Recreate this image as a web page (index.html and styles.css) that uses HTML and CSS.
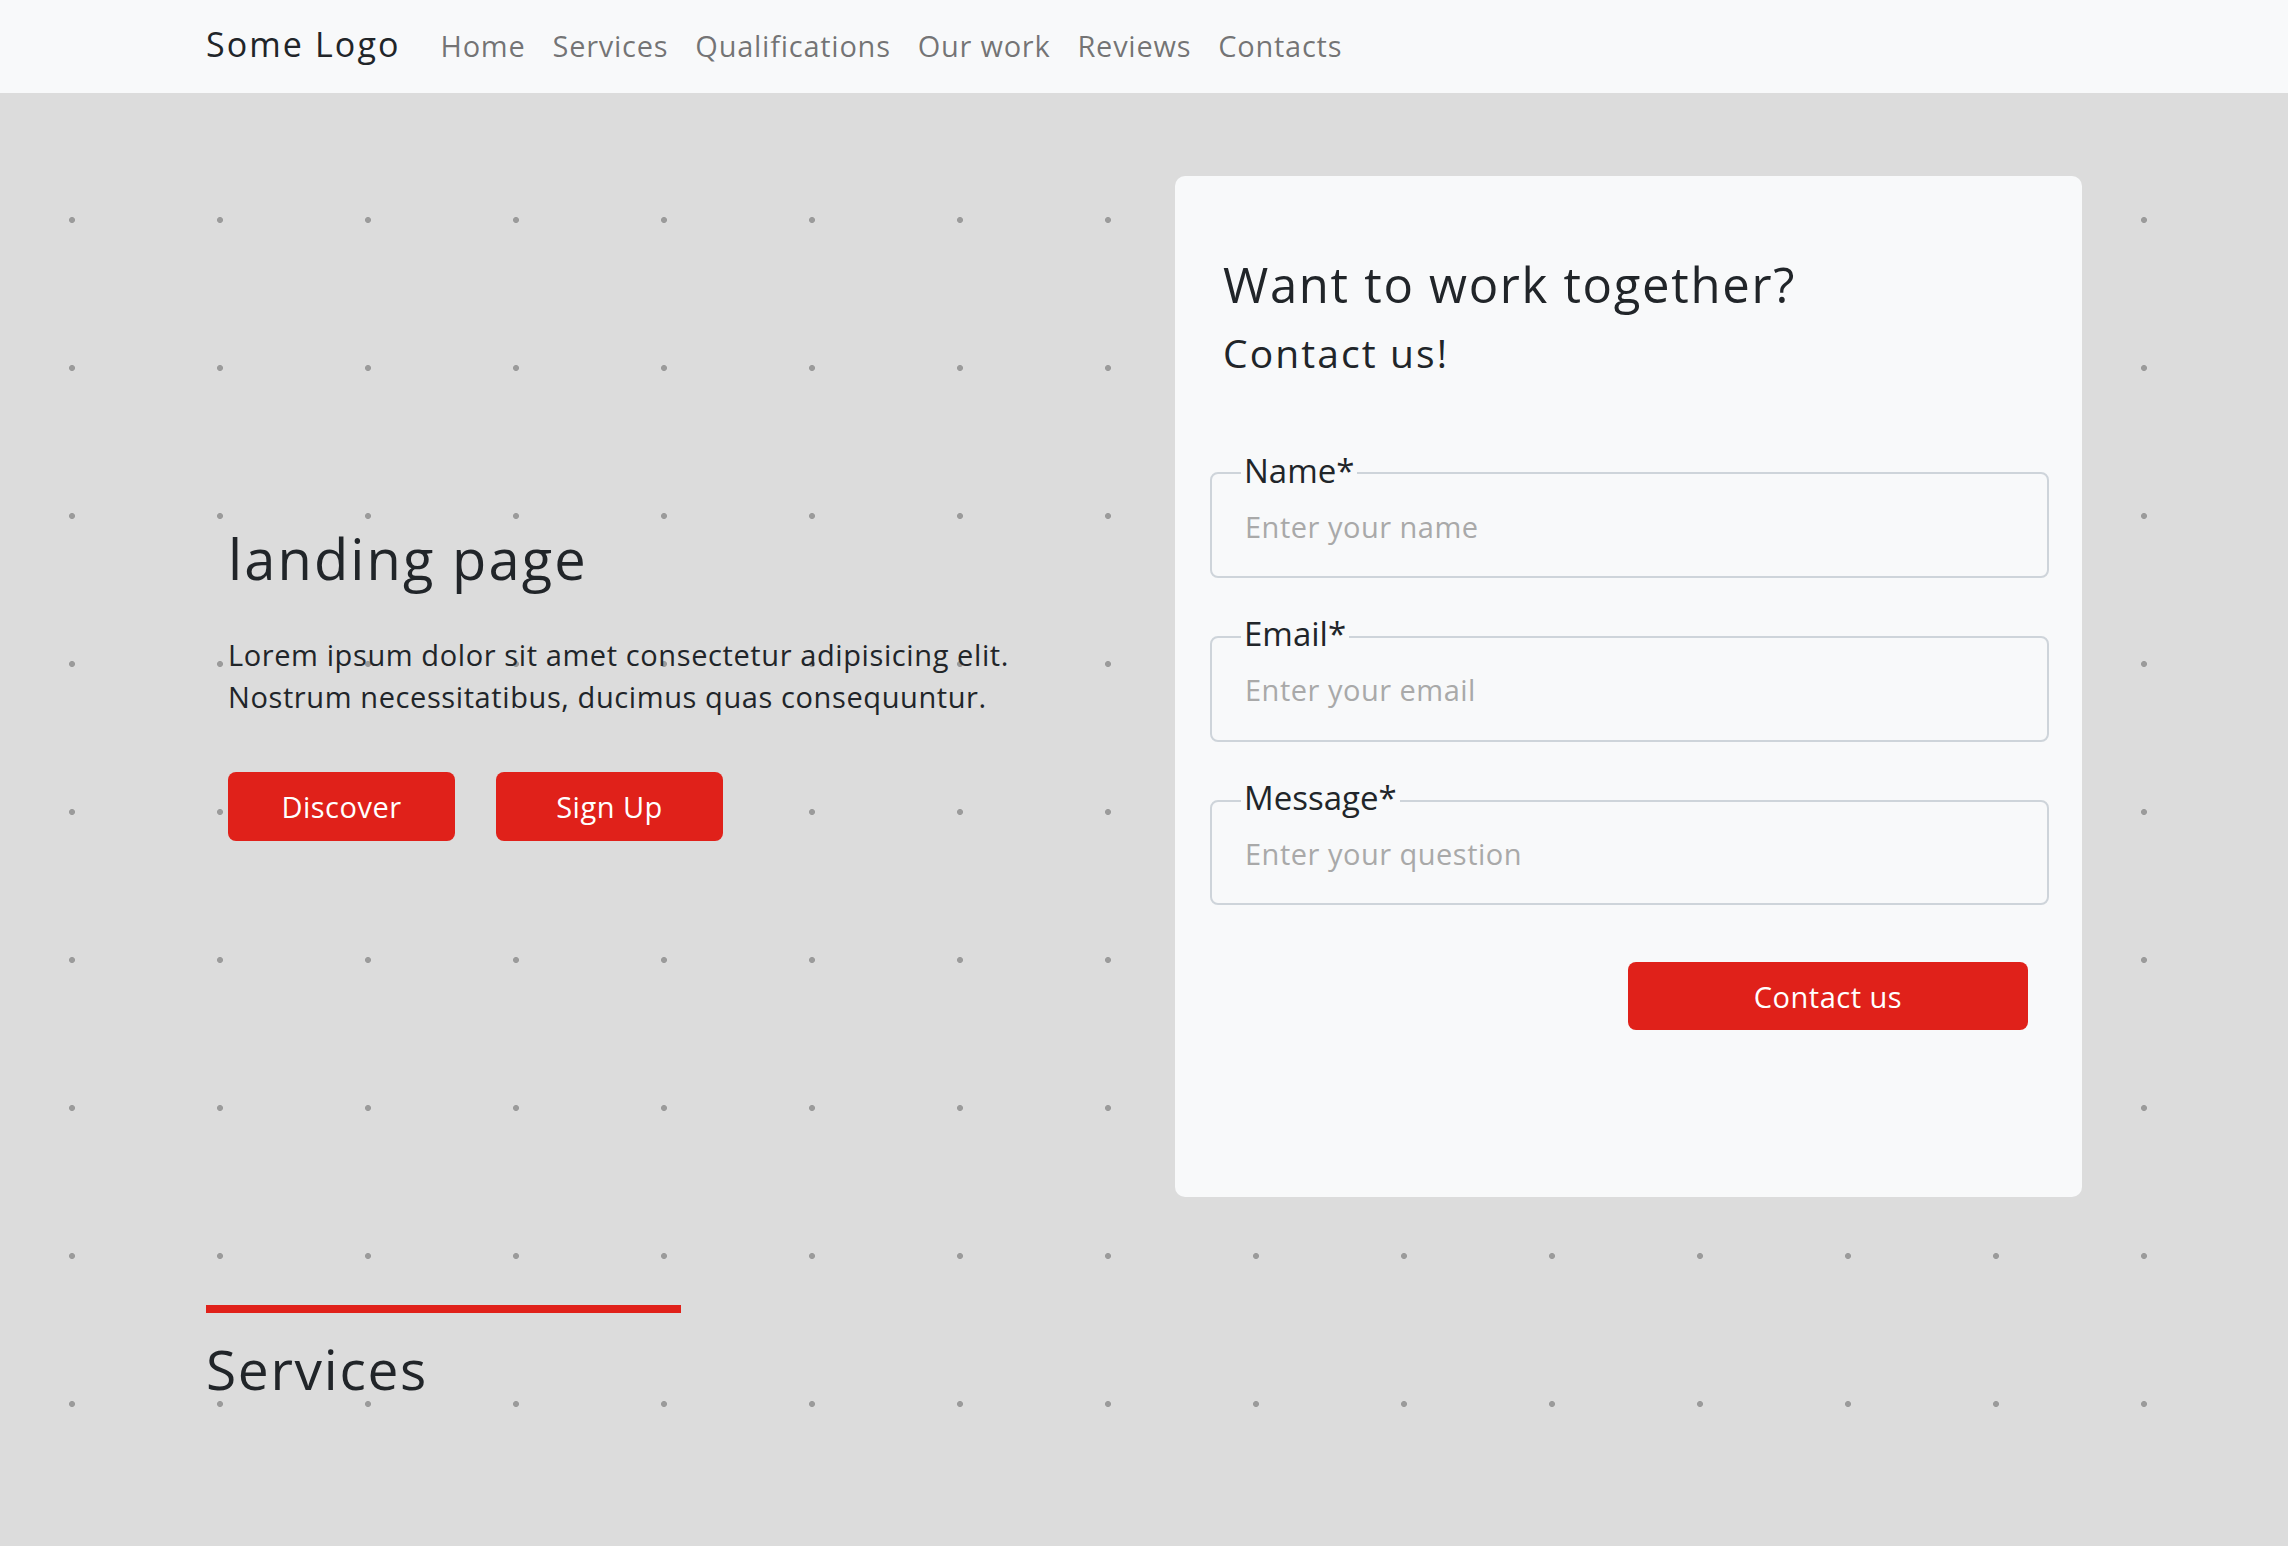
FILE: index.html
```html
<!DOCTYPE html>
<html lang="en">
<head>
<meta charset="utf-8">
<title>landing page</title>
<link rel="stylesheet" href="styles.css">
</head>
<body>
<nav class="navbar">
  <div class="container nav-inner">
    <a class="brand" href="#">Some Logo</a>
    <ul class="nav-links">
      <li><a href="#">Home</a></li>
      <li><a href="#">Services</a></li>
      <li><a href="#">Qualifications</a></li>
      <li><a href="#">Our work</a></li>
      <li><a href="#">Reviews</a></li>
      <li><a href="#">Contacts</a></li>
    </ul>
  </div>
</nav>

<main class="container hero">
  <section class="intro">
    <h1 class="intro-title">landing page</h1>
    <p class="intro-text">Lorem ipsum dolor sit amet consectetur adipisicing elit.<br>Nostrum necessitatibus, ducimus quas consequuntur.</p>
    <div class="actions">
      <button class="btn btn-hero" type="button">Discover</button>
      <button class="btn btn-hero" type="button">Sign Up</button>
    </div>
  </section>

  <section class="card">
    <h2 class="card-title">Want to work together?</h2>
    <h3 class="card-subtitle">Contact us!</h3>
    <form class="form">
      <fieldset class="field">
        <legend class="field-label">Name*</legend>
        <input class="field-input" type="text" placeholder="Enter your name">
      </fieldset>
      <fieldset class="field">
        <legend class="field-label">Email*</legend>
        <input class="field-input" type="email" placeholder="Enter your email">
      </fieldset>
      <fieldset class="field">
        <legend class="field-label">Message*</legend>
        <input class="field-input" type="text" placeholder="Enter your question">
      </fieldset>
      <div class="submit-row">
        <button class="btn btn-submit" type="button">Contact us</button>
      </div>
    </form>
  </section>
</main>

<section class="container services">
  <div class="services-bar"></div>
  <h2 class="services-title">Services</h2>
</section>
</body>
</html>
```

FILE: styles.css
```css
html {
  background-color: #dcdcdc;
  background-image: radial-gradient(circle at 74px 74px, #9b9b9b 2.6px, rgba(155,155,155,0) 3.4px);
  background-size: 148px 148px;
  background-position: -2px -2px;
  min-height: 100%;
}

body {
  margin: 0;
  font-family: "Open Sans", "Noto Sans", sans-serif;
  color: #212529;
}

.container {
  width: 1876px;
  margin: 0 auto;
  box-sizing: border-box;
}

/* navbar */
.navbar {
  background: #f8f9fa;
  height: 93px;
}

.nav-inner {
  height: 100%;
  display: flex;
  align-items: center;
}

.brand {
  font-size: 34px;
  color: #212529;
  text-decoration: none;
  padding-bottom: 6px;
  margin-right: 40px;
  letter-spacing: 2.1px;
}

.nav-links {
  list-style: none;
  margin: 0;
  padding: 0 0 2px;
  display: flex;
  gap: 27px;
}

.nav-links a {
  font-size: 29px;
  color: rgba(0,0,0,0.55);
  text-decoration: none;
  letter-spacing: 0.75px;
}

/* hero */
.hero {
  margin-top: 83px;
  display: grid;
  grid-template-columns: 1fr 907px;
  align-items: center;
}

.intro {
  padding-left: 22px;
  padding-bottom: 8px;
}

.intro-title {
  font-size: 56px;
  font-weight: 400;
  line-height: 1.2;
  margin: 0 0 42px;
  letter-spacing: 2.1px;
}

.intro-text {
  font-size: 29px;
  line-height: 42px;
  margin: 0 0 54px;
  letter-spacing: 0.6px;
}

.actions {
  display: flex;
  gap: 41px;
}

.btn {
  font-family: inherit;
  border: none;
  background: #e0211a;
  color: #ffffff;
  border-radius: 8px;
  cursor: pointer;
}

.btn-hero {
  width: 227px;
  height: 69px;
  font-size: 29px;
  letter-spacing: 0.5px;
}

/* card */
.card {
  background: #f8f9fa;
  border-radius: 10px;
  padding: 79px 33px 167px 35px;
}

.card-title {
  font-size: 49px;
  font-weight: 400;
  line-height: 1.2;
  margin: 0 0 16px 13px;
  letter-spacing: 1.7px;
}

.card-subtitle {
  font-size: 39px;
  font-weight: 400;
  line-height: 1.2;
  margin: 0 0 74px 13px;
  letter-spacing: 2.1px;
}

.form {
  display: flex;
  flex-direction: column;
  gap: 36px;
}

.field {
  margin: 0;
  padding: 0 0 20px 0;
  border: 2px solid #ced4da;
  border-radius: 8px;
  min-width: 0;
}

.field-label {
  font-size: 33px;
  line-height: 1.2;
  padding: 0 3px 6px;
  margin-left: 29px;
  color: #212529;
}

.field-input {
  display: block;
  box-sizing: border-box;
  width: 100%;
  height: 60px;
  border: none;
  background: transparent;
  padding: 0 33px;
  font-family: inherit;
  font-size: 29px;
  color: #212529;
  outline: none;
}

.field-input::placeholder {
  color: #a9a9a9;
  letter-spacing: 0.5px;
}

.submit-row {
  display: flex;
  justify-content: flex-end;
  padding-right: 21px;
  margin-top: 21px;
}

.btn-submit {
  width: 400px;
  height: 68px;
  font-size: 29px;
  letter-spacing: 0.5px;
}

/* services */
.services {
  margin-top: 108px;
  padding-bottom: 100px;
}

.services-bar {
  width: 475px;
  height: 8px;
  background: #e0211a;
  margin-bottom: 23px;
}

.services-title {
  font-size: 55px;
  font-weight: 400;
  line-height: 1.2;
  margin: 0;
  letter-spacing: 1.7px;
}
```
